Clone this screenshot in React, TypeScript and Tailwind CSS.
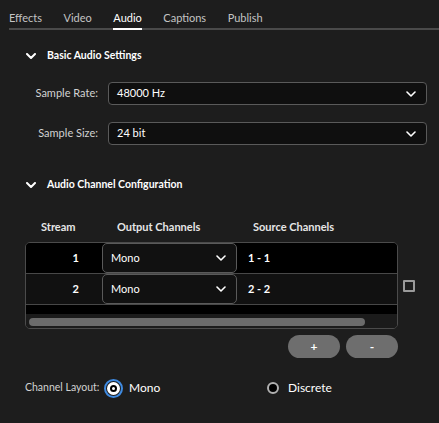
import React from "react";

const font = { fontFamily: '"Lato", "Noto Sans", sans-serif' };

function Chevron({ className = "" }: { className?: string }) {
  return (
    <svg viewBox="0 0 10 6" className={className} fill="none">
      <path d="M1 1l4 4 4-4" stroke="currentColor" strokeWidth="1.6" strokeLinecap="round" strokeLinejoin="round" />
    </svg>
  );
}

function SectionHeader({ title }: { title: string }) {
  return (
    <div className="flex h-[20px] items-center pl-[26px]">
      <svg viewBox="0 0 10 6" className="h-[6px] w-[10px] text-white" fill="none">
        <path d="M1 1l4 4 4-4" stroke="currentColor" strokeWidth="2" strokeLinecap="round" strokeLinejoin="round" />
      </svg>
      <span className="ml-[11px] text-[10.5px] font-bold text-white">{title}</span>
    </div>
  );
}

function SelectRow({ label, value }: { label: string; value: string }) {
  return (
    <div className="flex h-[23px] items-center">
      <div className="w-[98px] whitespace-nowrap text-right text-[11px] text-[#d2d2d2]">{label}</div>
      <div className="ml-[10px] flex h-[23px] w-[319px] items-center justify-between rounded-[4px] border border-[#5a5a5a] bg-[#0f0f0f] pl-[8px] pr-[10px]">
        <span className="text-[11px] text-white">{value}</span>
        <Chevron className="h-[6px] w-[10px] text-white" />
      </div>
    </div>
  );
}

function TableRow({ n, src, bg }: { n: string; src: string; bg: string }) {
  return (
    <div className={`flex h-[30px] items-stretch ${bg}`}>
      <div className="flex w-[76px] items-center justify-end pr-[23px] text-[11px] font-bold text-white">{n}</div>
      <div className="flex w-[135px] items-center justify-between rounded-[5px] border border-[#5a5a5a] bg-[#111111] pl-[8px] pr-[10px]">
        <span className="text-[11px] text-white">Mono</span>
        <Chevron className="h-[6px] w-[10px] text-white" />
      </div>
      <div className="flex items-center pl-[11px] text-[11px] font-bold text-white">{src}</div>
    </div>
  );
}

export default function App() {
  const tabs = ["Effects", "Video", "Audio", "Captions", "Publish"];
  return (
    <div className="h-[423px] w-[439px] overflow-hidden bg-[#1d1d1d]" style={font}>
      <div className="ml-[9px] flex h-[30px] gap-[21.5px] border-b-2 border-[#4a4a4a]">
        {tabs.map((t) => (
          <div
            key={t}
            className={
              t === "Audio"
                ? "-mb-[2px] h-[30px] border-b-2 border-white pt-[10px] text-[11px] leading-[15px] text-white"
                : "h-[28px] pt-[10px] text-[11px] leading-[15px] text-[#c4c4c4]"
            }
          >
            {t}
          </div>
        ))}
      </div>

      <div className="mt-[16px]">
        <SectionHeader title="Basic Audio Settings" />
      </div>
      <div className="mt-[16px]">
        <SelectRow label="Sample Rate:" value="48000 Hz" />
      </div>
      <div className="mt-[17px]">
        <SelectRow label="Sample Size:" value="24 bit" />
      </div>

      <div className="mt-[30px]">
        <SectionHeader title="Audio Channel Configuration" />
      </div>

      <div className="ml-[25px] mt-[22px] flex h-[20px] items-center text-[11px] font-bold text-[#e6e6e6]">
        <div className="w-[92px] pl-[16px]">Stream</div>
        <div className="w-[136px]">Output Channels</div>
        <div>Source Channels</div>
      </div>

      <div className="ml-[25px] mt-[5px] flex items-center gap-[5px]">
        <div className="h-[87px] w-[373px] overflow-hidden rounded-[5px] border border-[#4b4b4b]">
          <TableRow n="1" src="1 - 1" bg="bg-black" />
          <div className="h-px bg-[#484848]" />
          <TableRow n="2" src="2 - 2" bg="bg-[#111111]" />
          <div className="h-px bg-[#484848]" />
          <div className="h-[9px] bg-black" />
          <div className="flex h-[15px] items-center bg-[#1b1b1b] pl-[3px]">
            <div className="h-[8px] w-[336px] rounded-full bg-[#6b6b6b]" />
          </div>
        </div>
        <div className="h-[12px] w-[12px] rounded-[1px] border-2 border-[#9a9a9a]" />
      </div>

      <div className="mt-[6px] flex w-[398px] justify-end gap-[6px]">
        <button className="h-[23px] w-[52px] rounded-full bg-[#6e6e6e] text-[12px] font-bold text-white">+</button>
        <button className="h-[23px] w-[52px] rounded-full bg-[#6e6e6e] text-[12px] font-bold text-white">-</button>
      </div>

      <div className="ml-[25px] mt-[20px] flex h-[20px] items-center">
        <span className="w-[79px] whitespace-nowrap text-[10.5px] text-[#d2d2d2]">Channel Layout:</span>
        <div className="flex h-[19px] w-[19px] items-center justify-center rounded-full border-2 border-[#3f8ae0]">
          <div className="flex h-[13px] w-[13px] items-center justify-center rounded-full bg-white">
            <div className="flex h-[7px] w-[7px] items-center justify-center rounded-full bg-black">
              <div className="h-[3px] w-[3px] rounded-full bg-white" />
            </div>
          </div>
        </div>
        <span className="ml-[6px] w-[138px] text-[12px] text-white">Mono</span>
        <div className="h-[12px] w-[12px] rounded-full border-2 border-[#b0b0b0] bg-black" />
        <span className="ml-[9px] text-[12px] text-white">Discrete</span>
      </div>
    </div>
  );
}
